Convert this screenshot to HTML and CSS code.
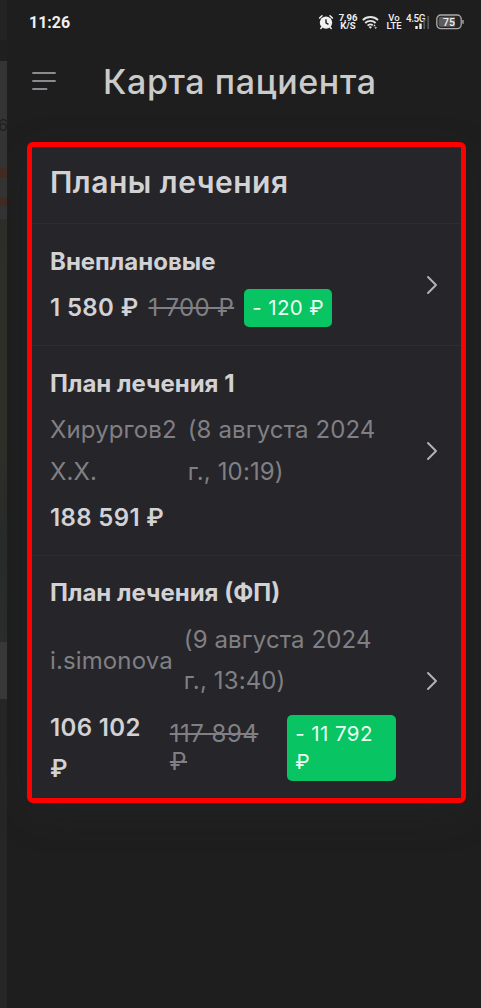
FILE: index.html
```
<!DOCTYPE html>
<html lang="ru">
  <head>
    <meta charset="UTF-8" />
    <meta name="viewport" content="width=device-width, initial-scale=1.0" />
    <title>Карта пациента</title>
    <link rel="stylesheet" href="styles.css">
  </head>
  <body>
    <!-- edge of the page under the drawer -->
    <div class="underlay">
      <div class="underlay-top"></div>
      <div class="underlay-bar"></div>
      <div class="underlay-card">6</div>
      <div class="underlay-line"></div>
      <div class="underlay-gap"></div>
      <div class="underlay-line"></div>
      <div class="underlay-space"></div>
      <div class="underlay-photo"></div>
      <div class="underlay-block"></div>
    </div>

    <div class="screen">
      <div class="status-bar">
        <span class="time">11:26</span>
        <div class="status-icons">
          <svg class="alarm" width="16" height="16" viewBox="0 0 16 16">
            <circle cx="8" cy="8.6" r="6.2" fill="#f2f2f2" />
            <path d="M1.6 4 4 1.8M14.4 4 12 1.8M3.8 13.2l-1 1.2M12.2 13.2l1 1.2" stroke="#f2f2f2" stroke-width="1.5" stroke-linecap="round" />
            <path d="M8 5.2v3.7l2.5 1.5" fill="none" stroke="#1e1e1e" stroke-width="1.4" />
          </svg>
          <span class="stack speed"><b>7,96</b><b>K/S</b></span>
          <svg class="wifi" width="17" height="15" viewBox="0 0 17 15">
            <g fill="none" stroke="#e4e4e4" stroke-width="1.9">
              <path d="M.8 5.1a11 11 0 0 1 15.2 0" />
              <path d="M3.2 8a7.4 7.4 0 0 1 10.4 0" />
              <path d="M5.6 10.7a4 4 0 0 1 5.2-.4" />
            </g>
            <path d="M6.6 12a2.4 2.4 0 0 1 3.4 0l-1.7 1.8z" fill="#e4e4e4" />
            <path d="m11.2 11.2 1.3-1.6 1.3 1.6zM12.4 12.2H15l-1.3 1.8z" fill="#e4e4e4" />
          </svg>
          <span class="stack volte"><span>Vo</span><span>LTE</span></span>
          <div class="signal">
            <span>4.5G</span>
            <svg width="16" height="14" viewBox="0 0 16 14">
              <path d="M2.5 11v3M6.5 8.5V14" stroke="#f2f2f2" stroke-width="2.4" />
              <path d="M10.2 4.5V14M14.2 1v13" stroke="#555" stroke-width="1.8" />
            </svg>
          </div>
          <svg class="battery" width="28" height="16" viewBox="0 0 28 16">
            <rect x=".8" y="1" width="24.4" height="13.6" rx="4" fill="#262626" stroke="#aaa" stroke-width="1.3" />
            <path d="M5 2.8h14v10H5a2.3 2.3 0 0 1-2.3-2.3V5A2.3 2.3 0 0 1 5 2.8z" fill="#5c5c5c" />
            <path d="M27 6v3.8" stroke="#aaa" stroke-width="1.4" />
            <text x="13" y="11.7" text-anchor="middle">75</text>
          </svg>
        </div>
      </div>

      <header class="header">
        <svg class="menu" width="26" height="22" viewBox="0 0 26 22">
          <path d="M2 3h22M2 11h22M2 19h13.5" stroke="#8b8b8f" stroke-width="1.9" stroke-linecap="round" />
        </svg>
        <h1>Карта пациента</h1>
      </header>

      <main class="plans">
        <h2>Планы лечения</h2>

        <section class="plan">
          <div class="plan-info">
            <h3>Внеплановые</h3>
            <div class="prices">
              <span class="price">1 580 ₽</span>
              <s class="old-price">1 700 ₽</s>
              <span class="discount">- 120 ₽</span>
            </div>
          </div>
          <svg class="chevron" width="14" height="20" viewBox="0 0 14 20">
            <path d="m3 2 8 8-8 8" />
          </svg>
        </section>

        <section class="plan">
          <div class="plan-info">
            <h3>План лечения 1</h3>
            <div class="meta">
              <span class="doctor">Хирургов2<br>Х.Х.</span>
              <span class="date">(8 августа 2024<br>г., 10:19)</span>
            </div>
            <div class="prices">
              <span class="price">188 591 ₽</span>
            </div>
          </div>
          <svg class="chevron" width="14" height="20" viewBox="0 0 14 20">
            <path d="m3 2 8 8-8 8" />
          </svg>
        </section>

        <section class="plan">
          <div class="plan-info">
            <h3>План лечения (ФП)</h3>
            <div class="meta">
              <span class="doctor">i.simonova</span>
              <span class="date">(9 августа 2024<br>г., 13:40)</span>
            </div>
            <div class="prices wide">
              <span class="price">106 102<br>₽</span>
              <s class="old-price">117 894<br>₽</s>
              <span class="discount">- 11 792<br>₽</span>
            </div>
          </div>
          <svg class="chevron" width="14" height="20" viewBox="0 0 14 20">
            <path d="m3 2 8 8-8 8" />
          </svg>
        </section>
      </main>
    </div>
  </body>
</html>
```
FILE: styles.css
```
* {
  box-sizing: border-box;
}

body {
  display: flex;
  height: 1008px;
  margin: 0;
  overflow: hidden;
  background-color: #1e1e1e;
  color: #d2d2d5;
  font-family: Inter, sans-serif;
}

h1,
h2,
h3 {
  margin: 0;
}

/* Underlay */
.underlay {
  display: flex;
  flex-direction: column;
  width: 7px;
  flex-shrink: 0;
  overflow: hidden;
  background-color: #262626;
}

.underlay-top {
  height: 40px;
  background-color: #232323;
}

.underlay-bar {
  height: 21px;
  background-color: #1f1f1f;
}

.underlay-card {
  height: 107px;
  padding-top: 54px;
  background-color: #343434;
  color: #1f1f1f;
  font-size: 16px;
  letter-spacing: -3px;
  text-indent: -2px;
}

.underlay-line {
  height: 9px;
  background-color: #432b23;
}

.underlay-gap {
  height: 20px;
  background-color: #343434;
}

.underlay-space {
  height: 13px;
  background-color: #343434;
}

.underlay-photo {
  height: 423px;
  background: linear-gradient(#2e2e29, #303029 50%, #282b29 75%, #2b2d2c);
}

.underlay-block {
  height: 57px;
  background-color: #393939;
}

.screen {
  flex: 1;
}

/* Status bar */
.status-bar {
  display: flex;
  justify-content: space-between;
  align-items: center;
  height: 44px;
  padding: 0 17px 0 22px;
  color: #f0f0f0;
  font-family: Roboto, sans-serif;
}

.time {
  font-size: 16px;
  font-weight: 700;
}

.status-icons {
  display: flex;
  align-items: center;
}

.stack {
  display: flex;
  flex-direction: column;
  align-items: center;
  font-size: 9.5px;
  line-height: 8.5px;
}

.speed {
  width: 18px;
  margin-left: 5px;
}

.wifi {
  margin-left: 5px;
}

.volte {
  width: 14px;
  margin-left: 8px;
  font-weight: 500;
}

.signal {
  display: flex;
  width: 24px;
  height: 16px;
  margin-left: 5px;
  font-size: 10px;
  font-weight: 500;
  letter-spacing: -0.5px;
  line-height: 9px;
}

.signal span {
  width: 8px;
  flex-shrink: 0;
}

.signal svg {
  flex-shrink: 0;
  margin-top: 1px;
}

.battery {
  margin-left: 6px;
}

.battery text {
  fill: #f0f0f0;
  font-size: 10.5px;
  font-weight: 500;
}

/* Header */
.header {
  display: flex;
  align-items: center;
  height: 74px;
  padding-left: 24px;
}

.header h1 {
  margin-left: 46px;
  font-size: 34px;
  font-weight: 500;
  letter-spacing: 0.6px;
  color: #cbcbcb;
}

/* Treatment plans */
.plans {
  width: 439px;
  height: 661px;
  margin: 24px 0 0 20px;
  border: 5px solid #ff0000;
  border-radius: 6px;
  background-color: #26252a;
  box-shadow: 0 12px 40px rgba(48, 48, 48, 0.2);
}

.plans h2 {
  height: 76px;
  padding-left: 18px;
  font-size: 30px;
  font-weight: 600;
  letter-spacing: 0.5px;
  line-height: 70px;
}

.plan {
  display: flex;
  justify-content: space-between;
  align-items: center;
  padding: 16.75px 22px 16px 18px;
  border-top: 1px solid #2d2d32;
}

.plan-info {
  display: flex;
  flex-direction: column;
  gap: 5px;
  font-size: 24px;
  line-height: 41.5px;
}

.plan h3 {
  font-size: 24px;
  font-weight: 700;
}

.meta {
  display: flex;
  align-items: center;
  gap: 11px;
  letter-spacing: 0.12px;
  color: #808084;
}

.prices {
  display: flex;
  align-items: center;
  gap: 10px;
}

.price {
  font-weight: 600;
  letter-spacing: 0.35px;
}

.old-price {
  color: #808084;
  letter-spacing: 0.3px;
  line-height: 28px;
  text-decoration-thickness: 2px;
}

.discount {
  padding: 5px 8px;
  border-radius: 5px;
  background-color: #08c463;
  color: #e9fff2;
  font-size: 20.5px;
  letter-spacing: 0.4px;
  line-height: 28px;
}

.wide {
  gap: 29px;
}

.wide .old-price {
  letter-spacing: 0.5px;
}

.wide .discount {
  width: 109px;
}

.chevron {
  flex-shrink: 0;
}

.chevron path {
  fill: none;
  stroke: #b4b4b8;
  stroke-width: 1.9;
  stroke-linecap: round;
  stroke-linejoin: round;
}
```
